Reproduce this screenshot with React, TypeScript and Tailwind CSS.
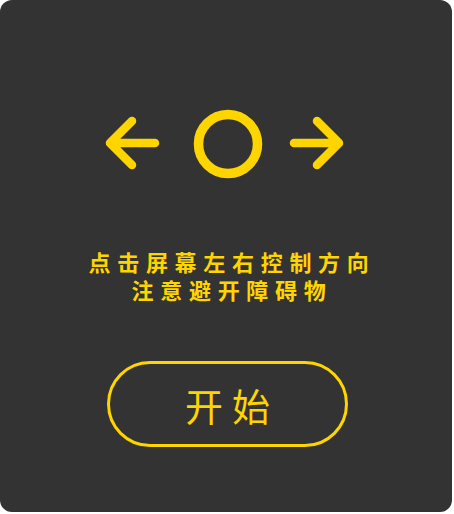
const YELLOW = '#FFD500';

const DirectionIcons = () => (
    <svg width="248" height="72" viewBox="0 0 248 72" fill="none">
        <g stroke={YELLOW} strokeWidth="8.5" strokeLinecap="round" strokeLinejoin="round">
            {/* left arrow */}
            <path d="M55 35 H10 M32 13 L10 35 L32 57" />
            {/* circle */}
            <circle cx="128" cy="36" r="29.5" strokeWidth="9.5" />
            {/* right arrow */}
            <path d="M194 35 H239 M217 13 L239 35 L217 57" />
        </g>
    </svg>
);

export default function App() {
    return (
        <div className="w-[454px] h-[514px] bg-white">
            <div
                className="w-[452px] h-[512px] rounded-[12px] bg-[#333333] flex flex-col items-center"
                style={{ fontFamily: '"Noto Sans CJK SC", "Noto Sans", sans-serif' }}
            >
                <div className="mt-[108px] ml-[-5px] h-[72px]">
                    <DirectionIcons />
                </div>

                <div className="mt-[67px] flex flex-col items-center pl-[12px] text-[22px] leading-[28px] font-bold tracking-[6.7px] text-[#FFD500]">
                    <p>点击屏幕左右控制方向</p>
                    <p>注意避开障碍物</p>
                </div>

                <button className="mt-[58px] ml-[3px] w-[241px] h-[86px] rounded-full border-[3px] border-[#FFD500] flex items-center justify-center pl-[9px] text-[38px] font-normal tracking-[9px] text-[#FFD500]">
                    开始
                </button>
            </div>
        </div>
    );
}
